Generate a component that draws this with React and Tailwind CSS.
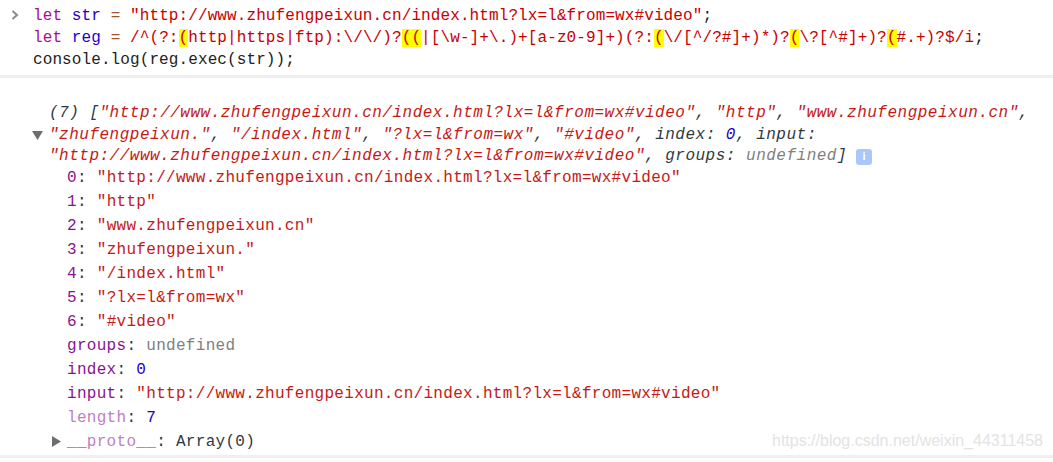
import React from "react";

const mono = "font-['Liberation_Mono',monospace]";
const Y = ({ children }) => <span className="bg-[#ffff00]">{children}</span>;

export default function App() {
  return (
    <div className={`w-[1053px] h-[462px] bg-white overflow-hidden ${mono} text-[16px] relative`}>
      {/* input */}
      <div className="flex pt-[5px] pb-[4px]">
        <div className="w-[33px] shrink-0 flex justify-center pt-[4px]">
          <svg width="10" height="12" viewBox="0 0 10 12" className="ml-[-4px]">
            <path d="M2.5 2 L7 6 L2.5 10" stroke="#8a8a8a" strokeWidth="2" fill="none" />
          </svg>
        </div>
        <div className="leading-[22px] tracking-[0.1px] whitespace-pre">
          <div>
            <span className="text-[#aa0d91]">let</span> <span className="text-[#1c00cf]">str</span>{" "}
            <span className="text-[#a0522d]">=</span>{" "}
            <span className="text-[#c80000]">"http://www.zhufengpeixun.cn/index.html?lx=l&amp;from=wx#video"</span>
            <span className="text-[#222]">;</span>
          </div>
          <div>
            <span className="text-[#aa0d91]">let</span> <span className="text-[#1c00cf]">reg</span>{" "}
            <span className="text-[#a0522d]">=</span>{" "}
            <span className="text-[#c80000]">
              /^(?:<Y>(</Y>http|https|ftp):\/\/)?<Y>((</Y>|[\w-]+\.)+[a-z0-9]+)(?:<Y>(</Y>\/[^/?#]+)*)?<Y>(</Y>\?[^#]+)?<Y>(</Y>#.+)?$/i
            </span>
            <span className="text-[#222]">;</span>
          </div>
          <div className="text-[#222]">console.log(reg.exec(str));</div>
        </div>
      </div>
      <div className="h-[3px] bg-[#efefef]" />

      {/* output */}
      <div className="pt-[25px]">
        <div className="italic leading-[21.5px] tracking-[0.5px] text-[#303942] whitespace-pre">
          <div className="pl-[49px]">
            (7) [<span className="text-[#c41a16]">"http://www.zhufengpeixun.cn/index.html?lx=l&amp;from=wx#video"</span>,{" "}
            <span className="text-[#c41a16]">"http"</span>, <span className="text-[#c41a16]">"www.zhufengpeixun.cn"</span>,
          </div>
          <div className="flex">
            <div className="w-[49px] flex justify-end pr-[6px] items-center">
              <svg width="11" height="9" viewBox="0 0 11 9">
                <path d="M0 0 L11 0 L5.5 9 Z" fill="#6e6e6e" />
              </svg>
            </div>
            <div>
              <span className="text-[#c41a16]">"zhufengpeixun."</span>, <span className="text-[#c41a16]">"/index.html"</span>,{" "}
              <span className="text-[#c41a16]">"?lx=l&amp;from=wx"</span>, <span className="text-[#c41a16]">"#video"</span>, index:{" "}
              <span className="text-[#1c00cf]">0</span>, input:
            </div>
          </div>
          <div className="pl-[49px] flex items-center">
            <span>
              <span className="text-[#c41a16]">"http://www.zhufengpeixun.cn/index.html?lx=l&amp;from=wx#video"</span>, groups:{" "}
              <span className="text-[#808080]">undefined</span>]
            </span>
            <span className="ml-[9px] w-[16px] h-[16px] rounded-[3px] bg-[#a8c7fa] text-white text-[11px] font-bold not-italic flex items-center justify-center font-['Liberation_Sans',sans-serif] tracking-normal">
              i
            </span>
          </div>
        </div>

        <div className="pl-[67px] leading-[24px] tracking-[0.3px] whitespace-pre text-[#303942] mt-[-2px]">
          {[
            "http://www.zhufengpeixun.cn/index.html?lx=l&from=wx#video",
            "http",
            "www.zhufengpeixun.cn",
            "zhufengpeixun.",
            "/index.html",
            "?lx=l&from=wx",
            "#video",
          ].map((v, i) => (
            <div key={i}>
              <span className="text-[#881391]">{i}</span>: <span className="text-[#c41a16]">"{v}"</span>
            </div>
          ))}
          <div>
            <span className="text-[#881391]">groups</span>: <span className="text-[#808080]">undefined</span>
          </div>
          <div>
            <span className="text-[#881391]">index</span>: <span className="text-[#1c00cf]">0</span>
          </div>
          <div>
            <span className="text-[#881391]">input</span>:{" "}
            <span className="text-[#c41a16]">"http://www.zhufengpeixun.cn/index.html?lx=l&amp;from=wx#video"</span>
          </div>
          <div>
            <span className="text-[#bf80bf]">length</span>: <span className="text-[#1c00cf]">7</span>
          </div>
          <div className="flex items-center ml-[-15px]">
            <svg width="9" height="11" viewBox="0 0 9 11" className="mr-[6px]">
              <path d="M0 0 L9 5.5 L0 11 Z" fill="#6e6e6e" />
            </svg>
            <span>
              <span className="text-[#bf80bf]">__proto__</span>: Array(0)
            </span>
          </div>
        </div>
      </div>

      <div className="absolute left-0 right-0 top-[455px] h-[3px] bg-[#efefef]" />
      <div className="absolute right-[10px] top-[429px] text-[16px] text-[#e3e3e3] font-['Liberation_Sans',sans-serif] tracking-normal not-italic">
        https://blog.csdn.net/weixin_44311458
      </div>
    </div>
  );
}
